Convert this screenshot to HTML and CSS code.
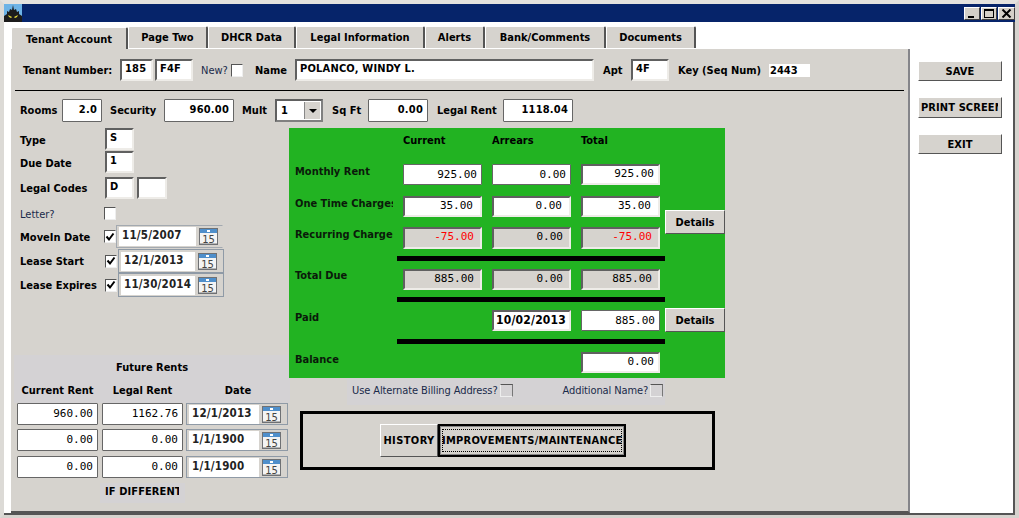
FILE: index.html
```html
<!DOCTYPE html>
<html lang="en">
<head>
	<meta charset="utf-8">
	<title>Tenant Account</title>
	<link rel="stylesheet" href="styles.css">
</head>
<body>
	<svg class="defs" width="0" height="0">
		<symbol id="cal" viewBox="0 0 19 17">
			<rect x="0.5" y="0.5" width="18" height="16" fill="#f4f4f4" stroke="#6f7174"/>
			<rect x="1" y="1" width="17" height="4" fill="#4f8fcb"/>
			<rect x="8" y="2" width="3" height="2" fill="#fff"/>
			<rect x="1" y="15" width="17" height="1" fill="#b5b5b5"/>
			<text x="9.5" y="14.5" text-anchor="middle" class="cal-num">15</text>
		</symbol>
		<symbol id="tick" viewBox="0 0 10 10">
			<path d="M1.5 4.5L4 7.5L8.5 1.5" fill="none" stroke="#000" stroke-width="2"/>
		</symbol>
	</svg>
	<div class="window">
		<div class="titlebar">
			<svg class="app-icon" width="18" height="18" viewBox="0 0 18 18">
				<rect width="18" height="18" fill="#6db3e6"/>
				<path d="M0 18V12L3 10V7L5 8L6 5L8 6L9 1L10 6L12 5L13 8L15 7V10L18 12V18Z" fill="#1c1c1c"/>
				<path d="M4 11L8 13L7 14L5 13ZM14 11L10 13L11 14L13 13Z" fill="#e8dc3a"/>
			</svg>
			<div class="win-btns">
				<span class="win-btn"><i class="glyph-min"></i></span>
				<span class="win-btn"><i class="glyph-max"></i></span>
				<span class="win-btn close">
					<svg width="11" height="9" viewBox="0 0 11 9"><path d="M1.5 0.5L9.5 8.5M9.5 0.5L1.5 8.5" stroke="#000" stroke-width="2" fill="none"/></svg>
				</span>
			</div>
		</div>

		<div class="tabs">
			<div class="tab active">Tenant Account</div>
			<div class="tab w80">Page Two</div>
			<div class="tab w88">DHCR Data</div>
			<div class="tab w129">Legal Information</div>
			<div class="tab w60">Alerts</div>
			<div class="tab w121">Bank/Comments</div>
			<div class="tab w90">Documents</div>
		</div>

		<div class="content">
			<div class="panel">
				<div class="row head-row">
					<span class="lbl w98">Tenant Number:</span>
					<span class="fld bold w33 h22">185</span>
					<span class="fld bold w38 h22 ml2">F4F</span>
					<span class="lbl thin ml7 w30">New?</span>
					<span class="chk"></span>
					<span class="lbl ml13 w40">Name</span>
					<span class="fld bold w299 h22">POLANCO, WINDY L.</span>
					<span class="lbl ml9 w28">Apt</span>
					<span class="fld bold w38 h22">4F</span>
					<span class="lbl ml9 w91">Key (Seq Num)</span>
					<span class="plain bold">2443</span>
				</div>
				<div class="rule"></div>
				<div class="row money-row">
					<span class="lbl w42">Rooms</span>
					<span class="fld num flat bold w40 h23">2.0</span>
					<span class="lbl ml8 w54">Security</span>
					<span class="fld num flat bold w70 h23">960.00</span>
					<span class="lbl ml8 w33">Mult</span>
					<span class="select"><span>1</span><span class="arrow"></span></span>
					<span class="lbl ml9 w36">Sq Ft</span>
					<span class="fld num flat bold w60 h23">0.00</span>
					<span class="lbl ml9 w66">Legal Rent</span>
					<span class="fld num flat bold w70 h23">1118.04</span>
				</div>

				<div class="columns">
					<div class="left">
						<div class="ltop">
							<div class="row h22"><span class="lbl low w85">Type</span><span class="fld bold w29 h22">S</span></div>
							<div class="row h22 mt1"><span class="lbl low w85">Due Date</span><span class="fld bold w29 h22">1</span></div>
							<div class="row h22 mt4"><span class="lbl w85">Legal Codes</span><span class="fld bold w29 h22">D</span><span class="fld w30 h22 ml3"></span></div>
							<div class="row h13 mt8"><span class="lbl low thin w84">Letter?</span><span class="chk"></span></div>
							<div class="row h23 mt5"><span class="lbl low w84">MoveIn Date</span><span class="chk checked"><svg width="10" height="10"><use href="#tick"/></svg></span><span class="picker first"><span class="date">11/5/2007</span><svg class="cal"><use href="#cal"/></svg></span></div>
							<div class="row h24 mt1"><span class="lbl w85">Lease Start</span><span class="chk checked"><svg width="10" height="10"><use href="#tick"/></svg></span><span class="picker ml1"><span class="date">12/1/2013</span><svg class="cal"><use href="#cal"/></svg></span></div>
							<div class="row h24"><span class="lbl w85">Lease Expires</span><span class="chk checked"><svg width="10" height="10"><use href="#tick"/></svg></span><span class="picker ml1"><span class="date">11/30/2014</span><svg class="cal"><use href="#cal"/></svg></span></div>
						</div>

						<div class="future">
							<div class="future-title">Future Rents</div>
							<div class="future-head">
								<span class="lbl center">Current Rent</span>
								<span class="lbl center">Legal Rent</span>
								<span class="lbl center">Date</span>
							</div>
							<div class="future-grid">
								<span class="fld num flat h22">960.00</span>
								<span class="fld num flat h22">1162.76</span>
								<span class="picker wide"><span class="date">12/1/2013</span><svg class="cal"><use href="#cal"/></svg></span>

								<span class="fld num flat h22">0.00</span>
								<span class="fld num flat h22">0.00</span>
								<span class="picker wide"><span class="date">1/1/1900</span><svg class="cal"><use href="#cal"/></svg></span>

								<span class="fld num flat h22 next">0.00</span>
								<span class="fld num flat h22 next">0.00</span>
								<span class="picker wide next"><span class="date">1/1/1900</span><svg class="cal"><use href="#cal"/></svg></span>
							</div>
							<div class="if-different"><span>IF DIFFERENT</span></div>
						</div>
					</div>

					<div class="middle">
						<div class="green">
							<span class="gh c2">Current</span>
							<span class="gh c3">Arrears</span>
							<span class="gh c4">Total</span>

							<span class="glbl r2">Monthly Rent</span>
							<span class="fld num flat c2 r2">925.00</span>
							<span class="fld num flat c3 r2">0.00</span>
							<span class="fld num c4 r2">925.00</span>

							<span class="glbl r3">One Time Charges</span>
							<span class="fld num c2 r3 pr3">35.00</span>
							<span class="fld num c3 r3 pr3">0.00</span>
							<span class="fld num c4 r3 pr3">35.00</span>
							<button class="btn details d1">Details</button>

							<span class="glbl r4">Recurring Charges</span>
							<span class="fld num ro red c2 r4">-75.00</span>
							<span class="fld num ro c3 r4">0.00</span>
							<span class="fld num ro red c4 r4">-75.00</span>

							<div class="bar b1"></div>

							<span class="glbl r6 up">Total Due</span>
							<span class="fld num ro c2 r6">885.00</span>
							<span class="fld num ro c3 r6">0.00</span>
							<span class="fld num ro c4 r6">885.00</span>

							<div class="bar b2"></div>

							<span class="glbl r8">Paid</span>
							<span class="fld bold big c3 r8">10/02/2013</span>
							<span class="fld num flat c4 r8">885.00</span>
							<button class="btn details d2">Details</button>

							<div class="bar b3"></div>

							<span class="glbl r10">Balance</span>
							<span class="fld num c4 r10">0.00</span>
						</div>

						<div class="extras">
							<span class="lbl thin">Use Alternate Billing Address?</span><span class="chk small"></span>
							<span class="lbl thin extra2">Additional Name?</span><span class="chk small"></span>
						</div>

						<div class="links">
							<button class="btn link-history">HISTORY</button>
							<button class="btn link-improve"><span>IMPROVEMENTS/MAINTENANCE</span></button>
						</div>
					</div>
				</div>
			</div>

			<div class="side">
				<button class="btn side-btn">SAVE</button>
				<button class="btn side-btn clip"><span>PRINT SCREEN</span></button>
				<button class="btn side-btn">EXIT</button>
			</div>
		</div>
	</div>
</body>
</html>
```

FILE: styles.css
```css
html, body {
	margin: 0;
	padding: 0;
	background-color: #fff;
}
body {
	font-family: "DejaVu Sans Condensed", "DejaVu Sans", sans-serif;
	font-size: 11px;
	color: #000;
}
.defs {
	position: absolute;
}
.window {
	box-sizing: border-box;
	width: 1019px;
	height: 518px;
	overflow: hidden;
	background-color: #fff;
	border-style: solid;
	border-width: 4px 4px 3px 4px;
	border-color: #e4e2de #d6d3ce #d6d3ce #dcdad6;
	box-shadow: inset -2px -2px 0 #555;
}

/* title bar */
.titlebar {
	display: flex;
	justify-content: space-between;
	align-items: center;
	height: 18px;
	margin-right: -1px;
	background-color: #06246a;
}
.win-btns {
	display: flex;
	gap: 1px;
	margin-right: 1px;
}
.win-btn {
	display: flex;
	align-items: center;
	justify-content: center;
	box-sizing: border-box;
	width: 16px;
	height: 13px;
	background-color: #d4d0c8;
	border: 1px solid;
	border-color: #fff #404040 #404040 #fff;
}
.win-btn.close {
	width: 17px;
}
.glyph-min {
	width: 6px;
	height: 2px;
	background: #000;
	margin-top: 7px;
	margin-right: 2px;
}
.glyph-max {
	box-sizing: border-box;
	width: 10px;
	height: 9px;
	border: 1px solid #000;
	border-top-width: 2px;
}

/* tabs */
.tabs {
	display: flex;
	align-items: flex-end;
	height: 27px;
	margin-left: 7px;
}
.tab {
	box-sizing: border-box;
	height: 22px;
	margin-bottom: 1px;
	background-color: #d6d3ce;
	border-top: 1px solid #fff;
	border-left: 1px solid #fff;
	border-right: 2px solid #555;
	border-radius: 2px 2px 0 0;
	text-align: center;
	font-weight: bold;
	line-height: 22px;
}
.tab.active {
	width: 117px;
	height: 22px;
	margin-bottom: 0;
	line-height: 24px;
}
.w80 { width: 80px; }
.w88 { width: 88px; }
.w129 { width: 129px; }
.w121 { width: 121px; }
.w90 { width: 90px; }

/* main panel */
.content {
	display: flex;
	margin-left: 7px;
}
.panel {
	box-sizing: border-box;
	width: 899px;
	height: 464px;
	padding-left: 4px;
	background-color: #d6d3ce;
	border-right: 2px solid #85858a;
	border-bottom: 2px solid #555;
}
.row {
	display: flex;
	align-items: center;
}
.head-row {
	height: 22px;
	margin-top: 10px;
	margin-left: 8px;
}
.head-row .w98 { width: 97px; }
.head-row .w30 { margin-left: 8px; width: 30px; }
.head-row .ml13 { margin-left: 12px; }
.rule {
	height: 1px;
	width: 889px;
	margin-top: 9px;
	background-color: #000;
}
.money-row {
	height: 23px;
	margin-top: 8px;
	margin-left: 5px;
}
.lbl {
	display: block;
	flex: none;
	font-weight: bold;
	white-space: nowrap;
}
.lbl.low { padding-top: 2px; }
.lbl.thin {
	font-weight: normal;
	color: #1a2a4a;
}
.center { text-align: center; }
.plain {
	box-sizing: border-box;
	width: 41px;
	height: 13px;
	padding-left: 1px;
	background-color: #fff;
	line-height: 13px;
}
.bold { font-weight: bold; }

/* text boxes */
.fld {
	display: block;
	flex: none;
	box-sizing: border-box;
	padding: 0 0 0 3px;
	background-color: #fff;
	border: 2px solid;
	border-color: #606060 #eeece8 #eeece8 #606060;
	line-height: 15px;
	white-space: nowrap;
	overflow: hidden;
	font-size: 11px;
	letter-spacing: 0.2px;
}
.fld.flat {
	border: 1px solid #666;
	border-radius: 1px;
	line-height: 19px;
}
.fld.num {
	padding: 0 4px 0 0;
	text-align: right;
	font-family: "DejaVu Sans Mono", monospace;
	letter-spacing: 0;
}
.fld.num.bold {
	padding-right: 4px;
	font-family: "DejaVu Sans Condensed", "DejaVu Sans", sans-serif;
	letter-spacing: 0.2px;
}
.fld.pr3 { padding-right: 7px; }
.fld.ro { background-color: #d6d3ce; padding-right: 6px; }
.fld.red { color: #f00; }
.fld.big {
	font-size: 12px;
	padding-left: 2px;
	padding-top: 1px;
}

.w29 { width: 29px; }
.w30 { width: 30px; }
.w33 { width: 33px; }
.w38 { width: 38px; }
.w40 { width: 40px; }
.w42 { width: 42px; }
.w54 { width: 54px; }
.w60 { width: 60px; }
.w66 { width: 66px; }
.w70 { width: 70px; }
.w28 { width: 28px; }
.w36 { width: 36px; }
.w84 { width: 84px; }
.w85 { width: 85px; }
.w91 { width: 91px; }
.w98 { width: 98px; }
.w299 { width: 299px; }
.h13 { height: 13px; }
.h22 { height: 22px; }
.h23 { height: 23px; }
.h24 { height: 24px; }
.ml1 { margin-left: 1px; }
.ml2 { margin-left: 2px; }
.ml3 { margin-left: 3px; }
.ml8 { margin-left: 8px; }
.ml9 { margin-left: 9px; }
.mt1 { margin-top: 1px; }
.mt4 { margin-top: 4px; }
.mt5 { margin-top: 5px; }
.mt8 { margin-top: 8px; }

.chk {
	display: flex;
	align-items: center;
	justify-content: center;
	flex: none;
	box-sizing: border-box;
	width: 12px;
	height: 13px;
	background-color: #fff;
	border: 1px solid;
	border-color: #555 #eee #eee #555;
}
.chk.small {
	width: 13px;
	margin-top: -1px;
	border-color: #555 #777 #eee #eee;
	background: transparent;
}
.select {
	display: flex;
	flex: none;
	align-items: center;
	justify-content: space-between;
	box-sizing: border-box;
	width: 48px;
	height: 23px;
	padding-left: 4px;
	padding-right: 1px;
	background-color: #fff;
	border: 2px solid;
	border-color: #606060 #808080 #808080 #606060;
	font-weight: bold;
}
.arrow {
	display: flex;
	align-items: center;
	justify-content: center;
	width: 15px;
	height: 17px;
	background-color: #d6d3ce;
	border-left: 1px solid #888;
}
.arrow::after {
	content: "";
	border-left: 4px solid transparent;
	border-right: 4px solid transparent;
	border-top: 4px solid #000;
}

/* date pickers */
.picker {
	display: flex;
	flex: none;
	align-items: center;
	box-sizing: border-box;
	width: 106px;
	height: 24px;
	padding: 1px 2px;
	background-color: #d6d3ce;
	border: 1px solid #8f9aa6;
}
.picker.first {
	width: 107px;
	height: 23px;
	border-color: #a3a9b0 transparent #a3a9b0 #a3a9b0;
}
.picker.first .cal { margin-right: 2px; }
.picker.wide {
	width: 102px;
	height: 22px;
}
.date {
	flex: 1;
	height: 19px;
	margin-right: 3px;
	padding-left: 3px;
	background-color: #fff;
	font-weight: bold;
	font-size: 11.5px;
	letter-spacing: 0.2px;
	line-height: 16px;
	color: #222;
}
.cal {
	flex: none;
	width: 19px;
	height: 17px;
	margin-right: 4px;
}
.cal-num {
	font-family: "DejaVu Sans", sans-serif;
	font-size: 10px;
	fill: #444;
}

/* lower part */
.columns {
	display: flex;
	margin-top: 6px;
}
.left {
	flex: none;
	width: 274px;
}
.ltop {
	height: 227px;
	margin-left: 5px;
}
.future {
	margin-left: -1px;
	width: 276px;
}
.future-title {
	box-sizing: border-box;
	height: 26px;
	padding-top: 6px;
	background-color: #d4d2d4;
	text-align: center;
	font-weight: bold;
}
.future-head {
	display: grid;
	grid-template-columns: 81px 81px 102px;
	column-gap: 4px;
	padding-left: 3px;
	height: 22px;
	background-color: #d4d2d4;
	line-height: 19px;
}
.future-grid {
	display: grid;
	grid-template-columns: 81px 81px 102px;
	grid-auto-rows: 22px;
	column-gap: 4px;
	row-gap: 4px;
	padding-left: 3px;
}
.future-grid .picker { margin-left: -1px; }
.future-grid .next { margin-top: 1px; }
.if-different {
	box-sizing: border-box;
	width: 85px;
	height: 20px;
	margin-left: 86px;
	margin-top: 6px;
	padding-left: 5px;
	background-color: #d4d2d4;
	font-weight: bold;
	line-height: 17px;
}
.if-different span {
	display: block;
	width: 74px;
	overflow: hidden;
	white-space: nowrap;
	letter-spacing: 0.1px;
}

/* green box */
.middle {
	flex: none;
	width: 436px;
}
.green {
	display: grid;
	position: relative;
	grid-template-columns: 114px 79px 79px 79px 85px;
	grid-template-rows: 36px 21px 11px 21px 10px 22px 20px 21px 20px 21px 21px 21px 5px;
	height: 250px;
	background-color: #22b322;
}
.green > .fld { height: 21px; }
.green .c2 { grid-column: 2; }
.green .c3 { grid-column: 3; margin-left: 10px; margin-right: -10px; }
.green .c4 { grid-column: 4; margin-left: 20px; margin-right: -20px; }
.green .r2 { grid-row: 2; }
.green .r3 { grid-row: 4; }
.green .r4 { grid-row: 6; height: 22px; }
.green .r6 { grid-row: 8; }
.green .r8 { grid-row: 10; }
.green .r10 { grid-row: 12; }
.gh {
	grid-row: 1;
	padding-top: 6px;
	font-weight: bold;
}
.gh.c3 { margin-left: 10px; }
.gh.c4 { margin-left: 20px; }
.glbl {
	grid-column: 1;
	width: 98px;
	padding-left: 6px;
	padding-top: 1px;
	overflow: hidden;
	white-space: nowrap;
	font-weight: bold;
	color: #0a1a0a;
}
.glbl.up { padding-top: 0; }
.bar {
	position: absolute;
	left: 108px;
	width: 268px;
	height: 5px;
	background-color: #000;
}
.b1 { top: 128px; }
.b2 { top: 169px; }
.b3 { top: 211px; }
.btn {
	box-sizing: border-box;
	padding: 0;
	background-color: #d6d3ce;
	border: 1px solid;
	border-color: #fff #555 #555 #fff;
	font-family: inherit;
	font-size: 11px;
	font-weight: bold;
	color: #000;
}
.details {
	position: absolute;
	left: 376px;
	width: 60px;
	height: 24px;
}
.d1 { top: 82px; }
.d2 { top: 180px; }

.extras {
	display: flex;
	align-items: center;
	box-sizing: border-box;
	height: 27px;
	width: 318px;
	margin-left: 58px;
	padding-left: 5px;
	padding-bottom: 2px;
	background-color: #d4d2d4;
}
.extras .lbl { letter-spacing: -0.1px; }
.extras .chk { margin-left: 2px; }
.extra2 { margin-left: 50px; }

.links {
	display: flex;
	align-items: center;
	box-sizing: border-box;
	width: 415px;
	height: 59px;
	margin-left: 11px;
	margin-top: 6px;
	padding-left: 77px;
	border: 3px solid #000;
}
.link-history {
	width: 58px;
	height: 33px;
	letter-spacing: 0.4px;
}
.link-improve {
	width: 188px;
	height: 33px;
	border: 2px solid #000;
	box-shadow: inset 0 0 0 1px #888;
	letter-spacing: 0.25px;
}
.link-improve span {
	display: block;
	margin: 2px;
	line-height: 23px;
	outline: 1px dotted #000;
	outline-offset: -1px;
	white-space: nowrap;
	overflow: hidden;
}

/* right buttons */
.side {
	display: flex;
	flex-direction: column;
	margin-left: 8px;
	margin-top: 12px;
	gap: 16px;
}
.side-btn {
	width: 84px;
	height: 20px;
	letter-spacing: 0.1px;
}
.side-btn.clip {
	height: 21px;
}
.side-btn.clip span {
	display: block;
	width: 77px;
	margin-left: 2px;
	overflow: hidden;
	white-space: nowrap;
}
```
